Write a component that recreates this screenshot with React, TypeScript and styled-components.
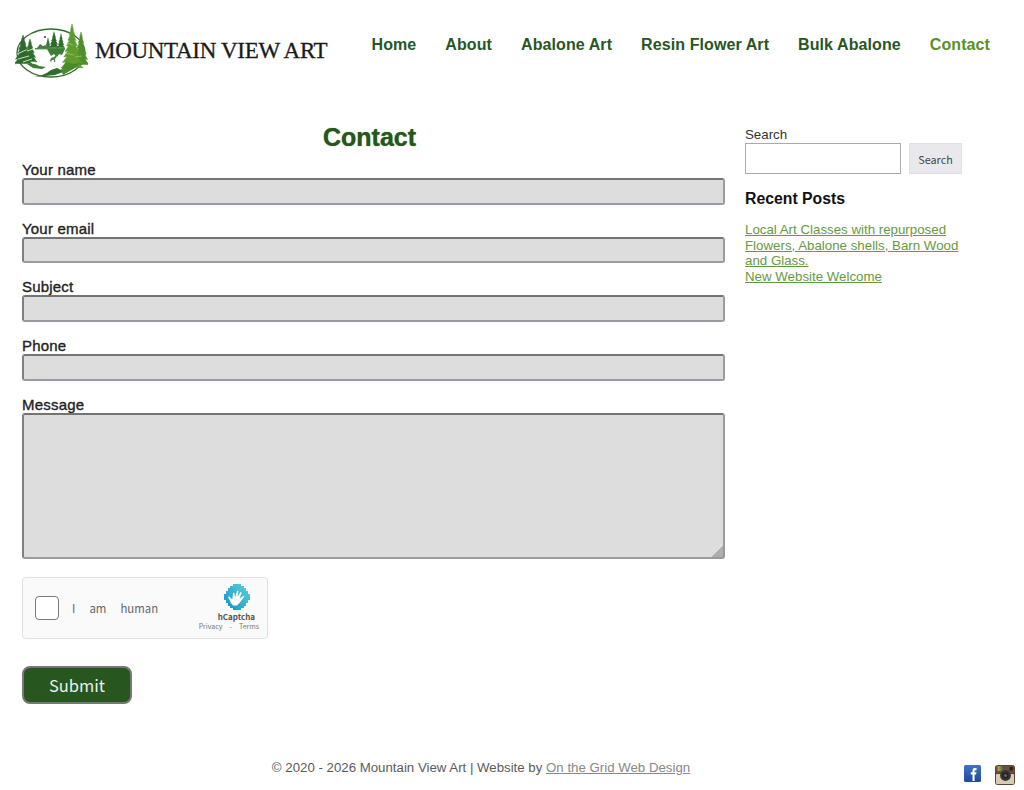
import styled, { createGlobalStyle } from "styled-components";

const navItems = ["Home", "About", "Abalone Art", "Resin Flower Art", "Bulk Abalone", "Contact"];
const fields = ["Your name", "Your email", "Subject", "Phone"];

const GlobalStyle = createGlobalStyle`
  html, body {
    margin: 0;
    padding: 0;
    background: #fff;
    font-family: "Liberation Sans", Arial, sans-serif;
    overflow: hidden;
  }
  * { box-sizing: border-box; }
  textarea::-webkit-resizer {
    background: linear-gradient(135deg, transparent 62%, #adadad 62%);
  }
`;

// jagged pine outline for the logo
const pine = (cx: number, top: number, base: number, half: number, tiers: number) => {
  const left: string[] = [];
  const right: string[] = [];
  const step = (base - top) / tiers;
  for (let i = 1; i <= tiers; i++) {
    const y = top + step * i;
    const w = (half * i) / tiers;
    right.push(`${cx + w},${y}`, `${cx + w * 0.6},${y - step * 0.1}`);
    left.unshift(`${cx - w * 0.6},${y - step * 0.1}`, `${cx - w},${y}`);
  }
  return [`${cx},${top}`, ...right, ...left].join(" ");
};

const Logo = () => (
  <LogoLink>
    <svg width="73" height="55" viewBox="0 0 73 55">
      <ellipse cx="36" cy="29" rx="34" ry="24" fill="none" stroke="#2f6b2c" strokeWidth="1.3" />
      <polygon points={pine(8, 11, 40, 9, 6)} fill="#2c6a2b" stroke="#2c6a2b" strokeWidth=".5" />
      <polygon points={pine(15, 15, 38, 7, 5)} fill="#2f6f2e" stroke="#2f6f2e" strokeWidth=".5" />
      <path d="M2 30l9-4M3 35l11-3M8 38l9-3M12 27l6-2" stroke="#dfe9da" strokeWidth=".9" />
      <polygon points={pine(33, 13, 24, 3, 4)} fill="#3a7436" />
      <polygon points={pine(39, 7, 24, 5, 5)} fill="#2c6a2b" />
      <polygon points={pine(46, 9, 24, 4, 5)} fill="#2f6f2e" />
      <path d="M22 24l3-4 3 2 3-1 3 3z" fill="#4a7f44" />
      <circle cx="30" cy="13" r="1.1" fill="#2b5a2a" />
      <path d="M20 24h30v1.400H20z" fill="#4f8a48" />
      <path d="M32 25h18l-3 6-3-1-2 3-3-3-3 2z" fill="#3f7d3a" />
      <path d="M35 37l1-3 3-1 2-2 .6 2-1.600 2 .4 3h-1l-.6-2-2 0-.6 2z" fill="#4c8547" />
      <path d="M12 40c5-1 9 0 12 2l7 1-4 2-9-1z" fill="#3c7a38" />
      <path d="M19 53c6-1 12-3 17-7l6-2 4 2 5-3-3 5-8 3-10 1z" fill="#2f6c2d" />
      <polygon points={pine(66, 8, 41, 8, 6)} fill="#4f8f2a" stroke="#4f8f2a" strokeWidth=".5" />
      <polygon points={pine(57, 0, 44, 11, 8)} fill="#5f9c2d" stroke="#5f9c2d" strokeWidth=".5" />
      <path d="M46 46l5-8 7 2 7-1-5 5-7 4-5 3z" fill="#4b8a2b" />
      <path d="M52 19l6 2M50 29l9 2M60 33l7-1" stroke="#9cc46e" strokeWidth=".8" />
    </svg>
    <LogoText>MOUNTAIN VIEW ART</LogoText>
  </LogoLink>
);

const HCaptchaMark = () => (
  <svg width="26" height="26" viewBox="0 0 26 26">
    <defs>
      <linearGradient id="hc" x1="1" y1="0" x2="0" y2="1">
        <stop offset="0" stopColor="#5fd6d3" />
        <stop offset="1" stopColor="#0f8fd0" />
      </linearGradient>
    </defs>
    <path d="M9 0h8v2h3v2h2v3h2v3h2v6h-2v3h-2v3h-2v2h-3v2H9v-2H6v-2H4v-3H2v-3H0v-6h2V7h2V4h2V2h3z" fill="url(#hc)" />
    <path d="M7 19l-3-6 1.300-.8 3 3.300L9 9l1.400-.3.800 4.800L13 6.500l1.500.5-1 6 3-5 1.300.8-2.300 5.700 4-2.800.8 1.100-3.800 5-3.500 3.700H9z" fill="#fff" />
  </svg>
);

const App = () => {
  return (
    <Page>
      <GlobalStyle />
      <Header>
        <Logo />
        <Nav>
          {navItems.map((item) => (
            <NavLink key={item} $active={item === "Contact"}>
              {item}
            </NavLink>
          ))}
        </Nav>
      </Header>
      <Content>
        <Main>
          <Title>Contact</Title>
          {fields.map((field) => (
            <Field key={field}>
              <Label>{field}</Label>
              <Input type="text" />
            </Field>
          ))}
          <Field>
            <Label>Message</Label>
            <TextArea />
          </Field>
          <Captcha>
            <CheckBox />
            <CaptchaText>I am human</CaptchaText>
            <CaptchaBrand>
              <CaptchaIcon>
                <HCaptchaMark />
              </CaptchaIcon>
              <CaptchaName>hCaptcha</CaptchaName>
              <CaptchaLinks>Privacy - Terms</CaptchaLinks>
            </CaptchaBrand>
          </Captcha>
          <SubmitButton>Submit</SubmitButton>
        </Main>
        <Sidebar>
          <SearchLabel>Search</SearchLabel>
          <SearchRow>
            <SearchInput type="text" />
            <SearchButton>Search</SearchButton>
          </SearchRow>
          <SideTitle>Recent Posts</SideTitle>
          <PostList>
            <PostLink>Local Art Classes with repurposed Flowers, Abalone shells, Barn Wood and Glass.</PostLink>
            <PostLink>New Website Welcome</PostLink>
          </PostList>
        </Sidebar>
      </Content>
      <Footer>
        <Copyright>
          © 2020 - 2026 Mountain View Art | Website by <FooterLink>On the Grid Web Design</FooterLink>
        </Copyright>
        <Social>
          <svg width="17" height="17" viewBox="0 0 17 17">
            <defs>
              <linearGradient id="fb" x1="0" y1="0" x2="0" y2="1">
                <stop offset="0" stopColor="#3f74c8" />
                <stop offset="1" stopColor="#1d4a9a" />
              </linearGradient>
            </defs>
            <rect width="17" height="17" rx="1.5" fill="url(#fb)" />
            <path d="M8.500 16V9.500H6.800V7.200h1.700V5.600C8.500 3.800 9.500 3 11 3h1.500v2.200h-1c-.6 0-.9.3-.9.9v1.100h1.800l-.3 2.300h-1.500V16z" fill="#fff" />
          </svg>
          <svg width="20" height="20" viewBox="0 0 20 20">
            <rect width="20" height="20" rx="3" fill="#5b4334" />
            <rect x="1" y="9" width="18" height="10" rx="1" fill="#d8cbb5" />
            <rect x="1" y="1" width="18" height="7" rx="1" fill="#6b4e3b" />
            <rect x="2" y="1" width="1.300" height="5" fill="#d9463d" />
            <rect x="3.300" y="1" width="1.300" height="5" fill="#e6c13b" />
            <rect x="4.600" y="1" width="1.300" height="5" fill="#5aa454" />
            <rect x="5.900" y="1" width="1.300" height="5" fill="#3c74c4" />
            <circle cx="10.500" cy="10.500" r="5.400" fill="#3a332e" />
            <circle cx="10.500" cy="10.500" r="3" fill="#222" />
            <circle cx="10.500" cy="10.500" r="1.600" fill="#5a6470" />
            <rect x="14.500" y="2" width="3.500" height="3.500" rx=".5" fill="#2b2522" />
          </svg>
        </Social>
      </Footer>
    </Page>
  );
};

export default App;

const Page = styled.div`
  display: flex;
  flex-direction: column;
  width: 1024px;
  height: 790px;
  overflow: hidden;
`;

const Header = styled.header`
  display: flex;
  justify-content: space-between;
  align-items: center;
  height: 90px;
  padding: 0 34px 0 15px;
`;

const LogoLink = styled.div`
  display: flex;
  align-items: center;
  gap: 7px;
  padding-top: 12px;
`;

const LogoText = styled.span`
  font-family: "Liberation Serif", "Times New Roman", serif;
  font-size: 23px;
  color: #1a1a1a;
  letter-spacing: -0.3px;
  -webkit-text-stroke: 0.3px #1a1a1a;
  white-space: nowrap;
`;

const Nav = styled.nav`
  display: flex;
  gap: 29px;
`;

const NavLink = styled.a<{ $active?: boolean }>`
  font-size: 16px;
  font-weight: 700;
  letter-spacing: 0.09px;
  color: ${(p) => (p.$active ? "#5a8f29" : "#27561f")};
`;

const Content = styled.div`
  display: flex;
  align-items: flex-start;
  gap: 20px;
  padding: 32px 0 0 22px;
`;

const Main = styled.main`
  width: 703px;
  display: flex;
  flex-direction: column;
`;

const Title = styled.h1`
  margin: 0 0 10px;
  font-size: 25px;
  line-height: 30px;
  font-weight: 700;
  text-align: center;
  padding-right: 8px;
  color: #27561f;
  text-shadow: 0 0 1px #4a7a2a;
`;

const Field = styled.div`
  display: flex;
  flex-direction: column;
  margin-bottom: 16px;
`;

const Label = styled.label`
  font-size: 15px;
  line-height: 16px;
  letter-spacing: 0.2px;
  color: #222;
  -webkit-text-stroke: 0.35px #222;
`;

const Input = styled.input`
  height: 26.7px;
  width: 100%;
  background: #ddd;
  border: 2px solid;
  border-color: #747474 #9a9aa0 #9a9aa0 #808080;
  border-radius: 3px;
`;

const TextArea = styled.textarea`
  display: block;
  height: 146px;
  width: 100%;
  background: #ddd;
  border: 2px solid;
  border-color: #747474 #9a9aa0 #9a9aa0 #808080;
  border-radius: 3px;
`;

const Captcha = styled.div`
  display: flex;
  align-items: center;
  width: 246px;
  height: 62px;
  margin-top: 2px;
  padding: 0 8px 0 12px;
  background: #fafafa;
  border: 1px solid #e0e0e0;
  border-radius: 4px;
  font-family: "Noto Sans CJK SC", "Noto Sans", sans-serif;
`;

const CheckBox = styled.div`
  width: 24px;
  height: 24px;
  background: #fff;
  border: 1px solid #7a7a7a;
  border-radius: 4px;
`;

const CaptchaText = styled.span`
  margin-left: 13px;
  font-size: 11.4px;
  word-spacing: 11.5px;
  color: #666;
  white-space: nowrap;
`;

const CaptchaBrand = styled.div`
  margin-left: auto;
  display: flex;
  flex-direction: column;
  align-items: flex-end;
`;

const CaptchaIcon = styled.div`
  display: flex;
  margin-right: 9px;
`;

const CaptchaName = styled.span`
  font-size: 8px;
  line-height: 11px;
  font-weight: 700;
  color: #555;
  margin: 1px 4px 0 0;
`;

const CaptchaLinks = styled.span`
  font-size: 7px;
  line-height: 9px;
  word-spacing: 5.5px;
  color: #777;
`;

const SubmitButton = styled.button`
  width: 110px;
  height: 38px;
  margin-top: 27px;
  background: #27561f;
  color: #eee;
  border: 2px solid #777;
  border-radius: 8px;
  font-family: "Noto Sans CJK SC", "Noto Sans", sans-serif;
  font-size: 16.5px;
  padding: 0;
`;

const Sidebar = styled.aside`
  width: 217px;
  padding-top: 5px;
`;

const SearchLabel = styled.div`
  font-size: 13.3px;
  line-height: 16px;
  color: #333;
`;

const SearchRow = styled.div`
  display: flex;
  gap: 8px;
`;

const SearchInput = styled.input`
  width: 156px;
  height: 31px;
  background: #fff;
  border: 1px solid #aaa;
`;

const SearchButton = styled.button`
  width: 53px;
  height: 31px;
  padding: 0;
  background: #e9e9ed;
  border: 1px solid #e0e0e4;
  color: #444;
  font-family: "Noto Sans CJK SC", "Noto Sans", sans-serif;
  font-size: 10.8px;
`;

const SideTitle = styled.h2`
  margin: 15px 0 0;
  font-size: 15.8px;
  line-height: 20px;
  font-weight: 700;
  color: #111;
`;

const PostList = styled.div`
  display: flex;
  flex-direction: column;
  margin-top: 13px;
`;

const PostLink = styled.a`
  font-size: 13.3px;
  line-height: 15.5px;
  color: #669a3e;
  text-decoration: underline;
`;

const Footer = styled.footer`
  display: grid;
  grid-template-columns: 962px 1fr;
  height: 31px;
  margin-top: auto;
`;

const Copyright = styled.div`
  padding-top: 1px;
  text-align: center;
  font-size: 13.25px;
  line-height: 16px;
  color: #5a5a5a;
`;

const FooterLink = styled.a`
  color: #888;
  text-decoration: underline;
`;

const Social = styled.div`
  display: flex;
  gap: 14px;
  align-items: flex-start;
  padding: 6px 0 0 2px;
`;
